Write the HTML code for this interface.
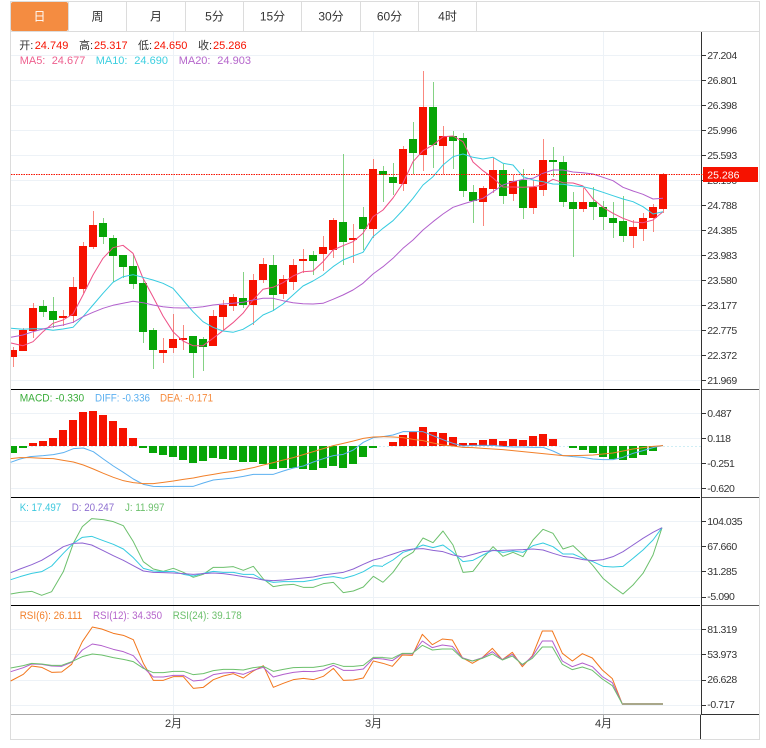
<!DOCTYPE html>
<html><head><meta charset="utf-8"><style>
html,body{margin:0;padding:0;background:#fff;width:766px;height:748px;overflow:hidden}
svg{display:block}
text{font-family:"Liberation Sans","Noto Sans CJK SC",sans-serif}
.t{font-size:12px;fill:#333;text-anchor:middle}
.a{font-size:10.5px;fill:#333;letter-spacing:-.45px}
.i{font-size:11px}
polyline{fill:none;stroke-linejoin:round}
.z polyline{vector-effect:non-scaling-stroke;stroke-width:1}
</style></head><body>
<svg width="766" height="748" viewBox="0 0 766 748" xmlns="http://www.w3.org/2000/svg">
<rect width="766" height="748" fill="#fff"/>
<!-- frame -->
<path d="M10.5 1.5H759.5V739.5H10.5Z M11 31.5H759" fill="none" stroke="#dcdcdc"/>
<!-- tabs -->
<rect x="11" y="2" width="57" height="29" rx="2" fill="#f48c41"/>
<path d="M68.5 2V31M126.5 2V31M185.5 2V31M243.5 2V31M301.5 2V31M360.5 2V31M418.5 2V31M476.5 2V31" stroke="#dcdcdc" fill="none"/>
<text class="t" x="39.5" y="20.5" style="fill:#fff">日</text>
<text class="t" x="97.5" y="20.5">周</text>
<text class="t" x="156" y="20.5">月</text>
<text class="t" x="214.5" y="20.5">5分</text>
<text class="t" x="272.5" y="20.5">15分</text>
<text class="t" x="331" y="20.5">30分</text>
<text class="t" x="389.5" y="20.5">60分</text>
<text class="t" x="447.5" y="20.5">4时</text>
<!-- grid -->
<path d="M11 55.5H701M11 80.5H701M11 105.5H701M11 130.5H701M11 155.5H701M11 180.5H701M11 205.5H701M11 230.5H701M11 255.5H701M11 280.5H701M11 305.5H701M11 330.5H701M11 355.5H701M11 380.5H701M11 413.5H701M11 438.5H701M11 463.5H701M11 488.5H701M11 521.5H701M11 546.5H701M11 571.5H701M11 597.5H701M11 629.5H701M11 654.5H701M11 680.5H701M11 705.5H701M173.5 32V714M373.5 32V714M603.5 32V714" stroke="#edf2f7" fill="none"/>
<!-- wicks -->
<path stroke="#f61200" stroke-opacity=".5" fill="none" d="M13.5 347V367M23.5 328V351M33.5 303V338M63.5 310V326M73.5 277V323M83.5 242V293M93.5 211V249M163.5 338V363M173.5 314V353M183.5 325V350M213.5 310V346M223.5 300V330M233.5 294V311M253.5 274V325M263.5 258V283M283.5 275V299M293.5 259V290M303.5 249V273M323.5 236V271M333.5 218V258M353.5 224V263M373.5 159V238M403.5 146V191M423.5 71V171M443.5 126V174M483.5 186V226M493.5 158V193M513.5 175V201M533.5 180V214M543.5 139V196M583.5 188V212M633.5 220V248M643.5 213V241M653.5 204V232M663.5 173V213"/>
<path stroke="#0aa60a" stroke-opacity=".5" fill="none" d="M43.5 300V317M53.5 297V328M103.5 218V244M113.5 235V282M123.5 255V278M133.5 255V289M143.5 279V343M153.5 328V369M193.5 336V378M203.5 337V371M243.5 272V308M273.5 255V311M313.5 251V275M343.5 154V265M363.5 207V250M383.5 166V202M393.5 163V195M413.5 122V174M433.5 82V168M453.5 131V169M463.5 133V197M473.5 185V223M503.5 164V204M523.5 169V219M553.5 147V177M563.5 156V207M573.5 192V257M593.5 187V220M603.5 201V230M613.5 202V238M623.5 196V242"/>
<!-- bodies -->
<path fill="#f61200" d="M11 350V357H17V350zM19 330V351h8V330zM29 308V331h8V308zM59 316V318h8V316zM69 287V316h8V287zM79 246V289h8V246zM89 225V247h8V225zM159 350V353h8V350zM169 339V348h8V339zM179 338V340h8V338zM209 316V346h8V316zM219 305V317h8V305zM229 297V306h8V297zM249 280V305h8V280zM259 264V280h8V264zM279 279V294h8V279zM289 265V282h8V265zM299 259V261h8V259zM319 247V254h8V247zM329 220V250h8V220zM349 238V240h8V238zM369 169V229h8V169zM399 149V184h8V149zM419 107V155h8V107zM439 136V146h8V136zM479 188V202h8V188zM489 170V189h8V170zM509 181V194h8V181zM529 187V208h8V187zM539 160V190h8V160zM579 202V209h8V202zM629 227V236h8V227zM639 218V229h8V218zM649 207V218h8V207zM659 174V209h8V174z"/>
<path fill="#07a507" d="M39 306V312h8V306zM49 311V320h8V311zM99 223V237h8V223zM109 238V256h8V238zM119 255V267h8V255zM129 266V284h8V266zM139 283V332h8V283zM149 330V350h8V330zM189 336V353h8V336zM199 339V347h8V339zM239 298V305h8V298zM269 265V295h8V265zM309 255V261h8V255zM339 222V242h8V222zM359 217V229h8V217zM379 171V175h8V171zM389 177V183h8V177zM409 139V153h8V139zM429 107V145h8V107zM449 136V141h8V136zM459 138V191h8V138zM469 192V201h8V192zM499 170V196h8V170zM519 180V208h8V180zM549 160V162h8V160zM559 162V202h8V162zM569 202V209h8V202zM589 202V207h8V202zM599 207V217h8V207zM609 218V223h8V218zM619 221V236h8V221z"/>
<!-- MA lines -->
<polyline stroke="#ee4f86" points="11,343 23,345.7 33,341.7 43,331.7 53,323.3 63,320 73,314 83,295 93,275 103,258.3 113,247.7 123,245.3 133,253.3 143,278.3 153,296.7 163,316 173,331.7 183,341 193,345.7 203,345.7 213,338.3 223,330.7 233,322.7 243,313.3 253,300 263,289.3 273,287.3 283,282.7 293,276 303,271.7 313,271 323,261.7 333,250 343,245.7 353,241.7 363,233.3 373,216.7 383,210 393,198 403,183 413,161.7 423,150.7 433,145 443,136.7 453,136 463,141.7 473,162 483,170.7 493,178 503,187 513,187 523,187.3 533,186.7 543,185 553,179.3 563,182.7 573,183 583,186 593,199 603,207.3 613,213.3 623,218.3 633,222 643,222.7 653,220 663,211.7"/>
<polyline stroke="#35cbe0" points="11,328.3 23,329.3 33,328.7 43,328.7 53,330.3 63,329 73,327.3 83,316.7 93,305 103,293.3 113,282.3 123,276.7 133,274.7 143,277.3 153,280 163,283.3 173,288.3 183,300 193,311.7 203,321.7 213,327.3 223,331 233,332.3 243,329.3 253,323.3 263,315 273,310.7 283,304 293,295 303,286 313,281 323,275 333,266.7 343,260 353,256 363,252.3 373,236.7 383,228.3 393,220.7 403,210 413,198.3 423,185 433,176.7 443,165 453,156.7 463,154 473,157.3 483,159 493,157.3 503,163.3 513,165 523,176.7 533,180 543,181.7 553,184 563,184.3 573,185.7 583,186.7 593,189 603,192.3 613,195.7 623,199 633,201.7 643,206.7 653,214 663,211.7"/>
<polyline stroke="#b25fcc" points="11,337.3 23,335 33,331.7 43,329 53,326.7 63,325 73,322.3 83,316.7 93,312.3 103,308.3 113,305.3 123,303.3 133,301.3 143,302.7 153,305 163,306.7 173,307.7 183,308 193,307.7 203,306.7 213,305 223,304 233,303.3 243,302.3 253,300 263,298.3 273,298.3 283,300.7 293,302.7 303,303.7 313,304 323,303.3 333,299.3 343,295 353,290 363,283.3 373,274 383,266.7 393,258.3 403,248.3 413,240 423,230 433,221.7 443,214 453,207.3 463,204 473,201 483,198.3 493,191.7 503,185 513,181.7 523,179.3 533,178.3 543,173.3 553,170 563,170 573,172 583,172.7 593,174 603,177.3 613,180.7 623,187.3 633,191 643,194.3 653,199 663,198.3"/>
<!-- MACD histogram -->
<path stroke="#cfeef5" stroke-dasharray="2 2" d="M11 446.5H703" fill="none"/>
<path fill="#f61200" d="M29 443V446h8V443zM39 441V446h8V441zM49 438V446h8V438zM59 430V446h8V430zM69 420V446h8V420zM79 412V446h8V412zM89 411V446h8V411zM99 415V446h8V415zM109 421V446h8V421zM119 428V446h8V428zM129 438V446h8V438zM389 442V446h8V442zM399 435V446h8V435zM409 432V446h8V432zM419 427V446h8V427zM429 432V446h8V432zM439 433V446h8V433zM449 437V446h8V437zM459 443V446h8V443zM469 443V446h8V443zM479 440V446h8V440zM489 439V446h8V439zM499 441V446h8V441zM509 439V446h8V439zM519 440V446h8V440zM529 436V446h8V436zM539 434V446h8V434zM549 439V446h8V439z"/>
<path fill="#07a507" d="M11 446V453H17V446zM19 446V448h8V446zM139 446V448h8V446zM149 446V453h8V446zM159 446V455h8V446zM169 446V457h8V446zM179 446V460h8V446zM189 446V463h8V446zM199 446V461h8V446zM209 446V458h8V446zM219 446V459h8V446zM229 446V460h8V446zM239 446V462h8V446zM249 446V462h8V446zM259 446V464h8V446zM269 446V469h8V446zM279 446V468h8V446zM289 446V468h8V446zM299 446V469h8V446zM309 446V470h8V446zM319 446V468h8V446zM329 446V466h8V446zM339 446V468h8V446zM349 446V464h8V446zM359 446V457h8V446zM369 446V448h8V446zM569 446V448h8V446zM579 446V450h8V446zM589 446V453h8V446zM599 446V457h8V446zM609 446V459h8V446zM619 446V460h8V446zM629 446V458h8V446zM639 446V455h8V446zM649 446V451h8V446z"/>
<g class="z" transform="translate(0 385) scale(.33333)">
<polyline stroke="#5cb0f0" points="32,232 60,222 90,215 130,212 160,209 190,203 220,191 250,189 280,200 310,222 340,243 370,262 400,282 430,298 460,304 490,305 520,304 550,304 580,304 610,294 640,285 670,282 700,279 730,274 760,268 790,268 820,268 850,258 880,249 910,243 940,231 970,221 1000,212 1030,208 1060,195 1090,172 1120,158 1149,155"/>
<polyline stroke="#f2802a" points="32,221 60,218 90,218 130,220 160,221 190,226 220,231 250,240 280,252 310,265 340,277 370,287 400,293 430,296 460,296 490,292 520,288 550,283 580,279 610,273 640,268 670,263 700,259 730,254 760,248 790,240 820,233 850,225 880,218 910,209 940,200 970,191 1000,182 1030,175 1060,168 1090,160 1120,156 1149,155"/>
</g>
<g class="z" transform="translate(383 385) scale(.33333)">
<polyline stroke="#5cb0f0" points="0,155 30,150 60,140 90,140 120,140 150,152 180,164 210,175 240,183 270,181 300,181 330,181 360,184 390,186 420,186 450,187 480,187 510,198 540,212 570,215 600,217 630,222 660,224 690,224 720,217 750,205 780,197 810,188 840,181"/>
<polyline stroke="#f2802a" points="0,155 30,156 60,158 90,163 120,167 150,174 180,180 210,183 240,187 270,188 300,190 330,192 360,194 390,197 420,200 450,203 480,206 510,209 540,212 570,212 600,211 630,210 660,207 690,204 720,198 750,192 780,188 810,184 840,182"/>
</g>
<!-- KDJ -->
<g class="z" transform="translate(0 495) scale(.33333)">
<polyline stroke="#6cc06c" points="32,297 60,292 95,289 125,301 155,290 190,230 220,145 247,95 275,71 310,74 340,80 370,92 400,140 430,200 460,222 490,229 520,220 550,232 580,247 610,238 640,217 670,217 700,215 730,226 760,214 790,252 820,275 850,270 880,268 910,277 940,277 970,266 1000,262 1030,293 1060,288 1090,276 1120,244 1149,262"/>
<polyline stroke="#35cbe0" points="32,254 60,245 95,235 125,230 155,213 190,175 220,145 247,127 275,124 310,137 340,148 370,162 400,188 430,220 460,228 490,230 520,229 550,238 580,243 610,235 640,229 670,232 700,232 730,238 760,238 790,255 820,262 850,260 880,260 910,260 940,255 970,248 1000,245 1030,250 1060,242 1090,230 1120,212 1149,214"/>
<polyline stroke="#8e63d2" points="32,233 60,222 95,209 125,196 155,178 190,155 220,145 247,144 275,150 310,167 340,182 370,196 400,212 430,228 460,232 490,233 520,234 550,236 580,238 610,236 640,234 670,236 700,240 730,245 760,249 790,255 820,257 850,255 880,252 910,249 940,246 970,240 1000,236 1030,232 1060,222 1090,208 1120,195 1149,188"/>
</g>
<g class="z" transform="translate(383 495) scale(.33333)">
<polyline stroke="#6cc06c" points="0,262 30,232 60,190 90,172 120,129 150,143 180,108 210,150 240,232 270,229 300,190 330,155 360,184 390,172 420,185 450,135 480,103 510,115 540,162 570,152 600,180 630,212 660,250 690,275 720,297 750,270 780,235 810,180 837,98"/>
<polyline stroke="#35cbe0" points="0,212 30,195 60,172 90,163 120,150 150,158 180,150 210,172 240,200 270,196 300,180 330,165 360,172 390,168 420,172 450,152 480,144 510,155 540,177 570,177 600,190 630,200 660,214 690,216 720,214 750,190 780,165 810,135 837,98"/>
<polyline stroke="#8e63d2" points="0,187 30,177 60,167 90,162 120,161 150,166 180,170 210,180 240,186 270,178 300,170 330,167 360,166 390,165 420,164 450,162 480,165 510,175 540,184 570,188 600,194 630,197 660,194 690,185 720,170 750,150 780,130 810,112 837,98"/>
</g>
<!-- RSI -->
<g class="z" transform="translate(0 605) scale(.33333)">
<polyline stroke="#f2761c" points="32,228 70,208 95,183 125,187 155,202 185,201 215,178 247,110 277,66 305,72 340,85 370,91 400,104 430,175 460,226 490,226 520,215 550,215 580,250 610,247 640,224 670,213 700,206 730,219 760,198 790,182 820,247 850,235 880,224 910,220 940,224 970,214 1000,190 1030,226 1060,225 1090,219 1120,168 1149,175"/>
<polyline stroke="#b25fcc" points="32,200 70,188 95,177 125,178 155,183 185,184 215,172 247,135 277,117 305,122 340,133 370,140 400,152 430,187 460,216 490,216 520,211 550,211 580,228 610,225 640,209 670,204 700,202 730,208 760,196 790,187 820,216 850,208 880,202 910,199 940,200 970,195 1000,181 1030,196 1060,196 1090,192 1120,160 1149,162"/>
<polyline stroke="#6cc06c" points="32,189 70,182 95,175 125,177 155,181 185,181 215,170 247,155 277,147 305,150 340,158 370,163 400,170 430,190 460,203 490,203 520,199 550,199 580,209 610,206 640,197 670,193 700,193 730,195 760,188 790,184 820,199 850,193 880,188 910,187 940,187 970,183 1000,175 1030,184 1060,184 1090,181 1120,157 1149,157"/>
</g>
<g class="z" transform="translate(383 605) scale(.33333)">
<polyline stroke="#f2761c" points="0,175 28,184 58,150 88,151 118,88 148,119 178,102 208,105 238,158 268,175 298,158 328,130 358,164 388,142 418,185 448,152 478,78 508,78 538,145 568,168 598,146 628,159 658,195 688,221 718,297 838,297"/>
<polyline stroke="#b25fcc" points="0,162 28,167 58,146 88,147 118,108 148,128 178,120 208,124 238,158 268,168 298,158 328,140 358,164 388,148 418,180 448,155 478,108 508,108 538,168 568,185 598,174 628,185 658,215 688,233 718,297 838,297"/>
<polyline stroke="#6cc06c" points="0,158 28,160 58,145 88,145 118,121 148,135 178,132 208,132 238,160 268,168 298,160 328,147 358,165 388,153 418,178 448,160 478,126 508,126 538,178 568,194 598,186 628,196 658,222 688,242 718,297 838,297"/>
</g>
<rect x="622" y="703" width="41" height="2" fill="#a9a78a"/>
<!-- separators / axes -->
<path d="M11 389.5H700M11 497.5H700M11 605.5H700" stroke="#000" fill="none"/>
<path d="M702 389.5H759M702 497.5H759M702 605.5H759" stroke="#555" fill="none"/>
<path d="M11 714.5H701" stroke="#aaa" fill="none"/>
<path d="M173.5 715V719M373.5 715V719M603.5 715V719" stroke="#aaa" fill="none"/>
<path d="M701.5 32V714M701 714.5H759M700.5 715V739" stroke="#333" fill="none"/>
<path d="M702 55.5h4M702 80.5h4M702 105.5h4M702 130.5h4M702 155.5h4M702 180.5h4M702 205.5h4M702 230.5h4M702 255.5h4M702 280.5h4M702 305.5h4M702 330.5h4M702 355.5h4M702 380.5h4M702 413.5h4M702 438.5h4M702 463.5h4M702 488.5h4M702 521.5h4M702 546.5h4M702 571.5h4M702 597.5h4M702 629.5h4M702 654.5h4M702 680.5h4M702 705.5h4" stroke="#333" fill="none"/>
<!-- axis labels -->
<text class="a" x="707.3" y="59">27.204</text>
<text class="a" x="707.3" y="84">26.801</text>
<text class="a" x="707.3" y="109">26.398</text>
<text class="a" x="707.3" y="134">25.996</text>
<text class="a" x="707.3" y="159">25.593</text>
<text class="a" x="707.3" y="184">25.190</text>
<text class="a" x="707.3" y="209">24.788</text>
<text class="a" x="707.3" y="234">24.385</text>
<text class="a" x="707.3" y="259">23.983</text>
<text class="a" x="707.3" y="284">23.580</text>
<text class="a" x="707.3" y="309">23.177</text>
<text class="a" x="707.3" y="334">22.775</text>
<text class="a" x="707.3" y="359">22.372</text>
<text class="a" x="707.3" y="384">21.969</text>
<text class="a" x="707.3" y="417">0.487</text>
<text class="a" x="707.3" y="442">0.118</text>
<text class="a" x="707.3" y="467">-0.251</text>
<text class="a" x="707.3" y="492">-0.620</text>
<text class="a" x="707.3" y="525">104.035</text>
<text class="a" x="707.3" y="550">67.660</text>
<text class="a" x="707.3" y="575">31.285</text>
<text class="a" x="707.3" y="600">-5.090</text>
<text class="a" x="707.3" y="633">81.319</text>
<text class="a" x="707.3" y="658">53.973</text>
<text class="a" x="707.3" y="683">26.628</text>
<text class="a" x="707.3" y="708">-0.717</text>
<!-- last price -->
<path d="M11 174.5H703" stroke="#f61200" stroke-dasharray="1.5 1" fill="none"/>
<rect x="703" y="167" width="55" height="15" fill="#f61200"/>
<text x="707.3" y="178.5" font-size="10.5" fill="#fff">25.286</text>
<!-- date labels -->
<text class="t" x="173.5" y="727" style="font-size:11px">2月</text>
<text class="t" x="373.5" y="727" style="font-size:11px">3月</text>
<text class="t" x="603.5" y="727" style="font-size:11px">4月</text>
<!-- info -->
<g class="i">
<text x="19.3" y="49" fill="#333">开:</text><text x="34.7" y="49" fill="#f61200">24.749</text>
<text x="79" y="49" fill="#333">高:</text><text x="94" y="49" fill="#f61200">25.317</text>
<text x="138" y="49" fill="#333">低:</text><text x="153.7" y="49" fill="#f61200">24.650</text>
<text x="198" y="49" fill="#333">收:</text><text x="213" y="49" fill="#f61200">25.286</text>
<text x="19.7" y="64" fill="#ee5f8e">MA5:</text><text x="51.7" y="64" fill="#ee5f8e">24.677</text>
<text x="95.7" y="64" fill="#3ccfe0">MA10:</text><text x="134.3" y="64" fill="#3ccfe0">24.690</text>
<text x="178.7" y="64" fill="#b565cb">MA20:</text><text x="217.3" y="64" fill="#b565cb">24.903</text>
<text x="19.7" y="401.5" fill="#3aad3a" textLength="64.5" lengthAdjust="spacingAndGlyphs">MACD: -0.330</text>
<text x="95" y="401.5" fill="#5cb0f0" textLength="55" lengthAdjust="spacingAndGlyphs">DIFF: -0.336</text>
<text x="160" y="401.5" fill="#f58a3c" textLength="53" lengthAdjust="spacingAndGlyphs">DEA: -0.171</text>
<text x="19.7" y="511" fill="#3cc8de" textLength="41.5" lengthAdjust="spacingAndGlyphs">K: 17.497</text>
<text x="71.7" y="511" fill="#8e6fd0" textLength="42.5" lengthAdjust="spacingAndGlyphs">D: 20.247</text>
<text x="125" y="511" fill="#6cc06c" textLength="39.5" lengthAdjust="spacingAndGlyphs">J: 11.997</text>
<text x="19.7" y="619" fill="#f2802a" textLength="62.5" lengthAdjust="spacingAndGlyphs">RSI(6): 26.111</text>
<text x="93" y="619" fill="#b565cb" textLength="69" lengthAdjust="spacingAndGlyphs">RSI(12): 34.350</text>
<text x="172.7" y="619" fill="#6cc06c" textLength="69" lengthAdjust="spacingAndGlyphs">RSI(24): 39.178</text>
</g>
</svg>
</body></html>
